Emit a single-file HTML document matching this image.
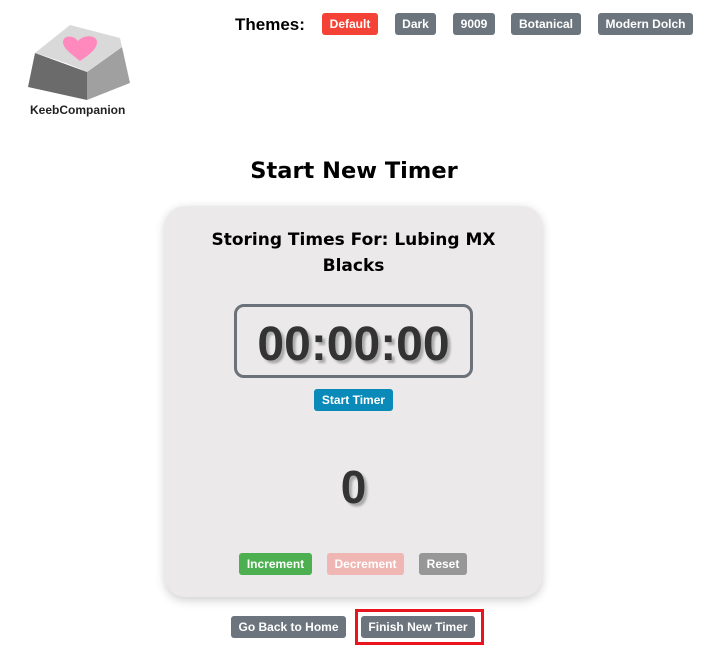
<!DOCTYPE html>
<html><head><style>
body{margin:0;width:708px;height:658px;background:#fff;font-family:"Liberation Sans",Arial,sans-serif;position:relative;overflow:hidden}
.a{position:absolute}
.b{position:absolute;color:#fff;font-weight:bold;font-size:12px;border-radius:3px;text-align:center;line-height:22px;height:22px}
.g{background:#6c757d}
</style></head><body>
<svg class="a" style="left:0;top:0" width="140" height="110" viewBox="0 0 140 110">
<polygon points="35,53 87,72 87,100 28,87" fill="#6b6b6b"/>
<polygon points="87,72 122,47 130,83 87,100" fill="#a0a0a0"/>
<path d="M35,53 L70,25 L120,38 L122,47 L87,72 C70,64 52,58 35,53Z" fill="#d9d9d9"/>
<path d="M80,61 C70,53 63,48 63,42 C63,36 72,34 78,41 C84,34 97,35 97,42 C97,49 89,55 80,61Z" fill="#ff88bd"/>
</svg>
<div class="a" style="left:30px;top:103px;font-size:12px;font-weight:bold;color:#222">KeebCompanion</div>
<div class="a" style="left:235px;top:15px;font-size:17px;font-weight:bold;color:#000">Themes:</div>
<div class="b" style="left:322px;top:13px;width:56px;background:#f44336">Default</div>
<div class="b g" style="left:395px;top:13px;width:41px">Dark</div>
<div class="b g" style="left:453px;top:13px;width:42px">9009</div>
<div class="b g" style="left:511px;top:13px;width:70px">Botanical</div>
<div class="b g" style="left:598px;top:13px;width:95px">Modern Dolch</div>
<div class="a" style="left:0;width:708px;top:158px;text-align:center;font-family:'DejaVu Sans',sans-serif;font-size:22.5px;font-weight:bold;color:#000">Start New Timer</div>
<div class="a" style="left:165px;top:206px;width:377px;height:391px;background:#ebe9ea;border-radius:20px;box-shadow:0 3px 10px rgba(0,0,0,0.2)"></div>
<div class="a" style="left:165px;width:377px;top:227px;text-align:center;font-family:'DejaVu Sans',sans-serif;font-size:17px;font-weight:bold;line-height:26px;color:#000">Storing Times For: Lubing MX<br>Blacks</div>
<div class="a" style="left:234px;top:304px;width:233px;height:68px;border:3px solid #6c727a;border-radius:10px;text-align:center;line-height:76px;font-size:48px;font-weight:bold;color:#333;text-shadow:3px 3px 2px #aaa">00:00:00</div>
<div class="b" style="left:314px;top:389px;width:79px;background:#0a8ab8">Start Timer</div>
<div class="a" style="left:165px;width:377px;top:460px;text-align:center;font-size:46px;font-weight:bold;color:#333;text-shadow:3px 3px 2px #aaa">0</div>
<div class="b" style="left:239px;top:553px;width:73px;background:#4caf50">Increment</div>
<div class="b" style="left:327px;top:553px;width:77px;background:#efb6b3">Decrement</div>
<div class="b" style="left:419px;top:553px;width:48px;background:#979797">Reset</div>
<div class="b g" style="left:231px;top:616px;width:115px">Go Back to Home</div>
<div class="a" style="left:355px;top:609px;width:123px;height:30px;border:3px solid #e8141e"></div>
<div class="b g" style="left:361px;top:616px;width:114px">Finish New Timer</div>
</body></html>
